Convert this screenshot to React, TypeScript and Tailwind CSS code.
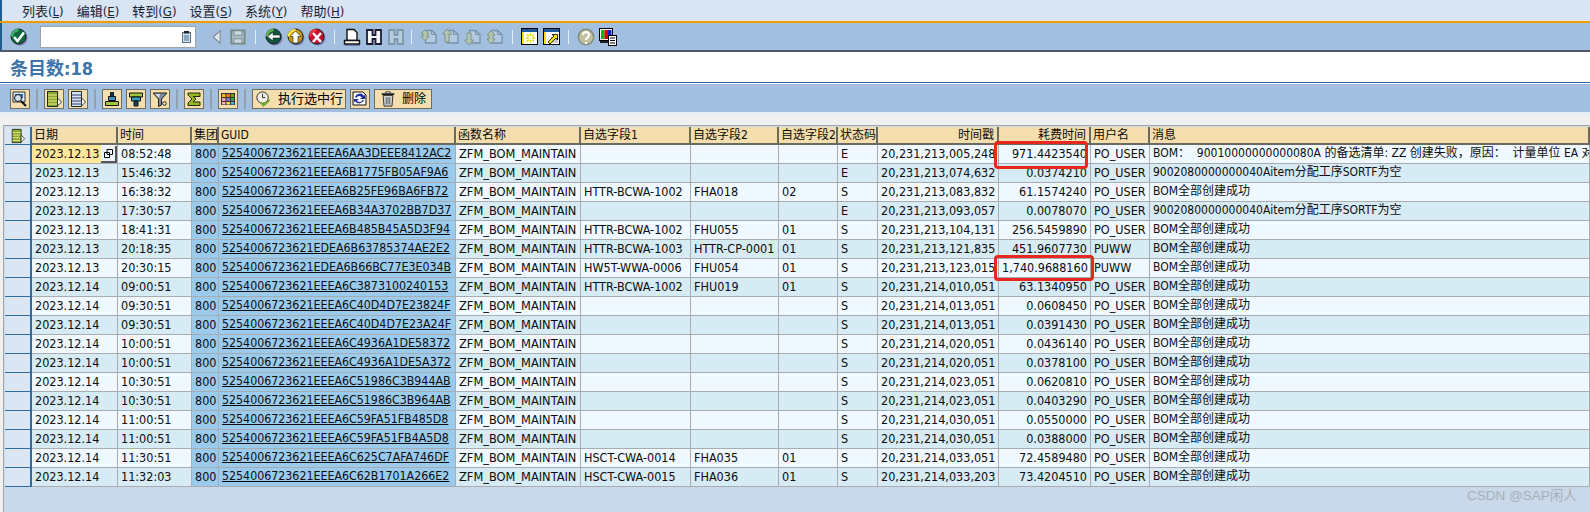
import type { ReactNode } from 'react';

const latin = '"DejaVu Sans Condensed", "Noto Sans CJK SC", sans-serif';

type Row = [string, string, string, string, string, string, string, string, string, string, string];

const ok = 'BOM全部创建成功';
const noOper = '9002080000000040Aitem分配工序SORTF为空';
const fail = 'BOM：\u00a0 90010000000000080A 的备选清单: ZZ 创建失败，原因：\u00a0 计量单位 EA 对';

const rows: Row[] = [
    ['2023.12.13', '08:52:48', '5254006723621EEEA6AA3DEEE8412AC2', '', '', '', 'E', '20,231,213,005,248', '971.4423540', 'PO_USER', fail],
    ['2023.12.13', '15:46:32', '5254006723621EEEA6B1775FB05AF9A6', '', '', '', 'E', '20,231,213,074,632', '0.0374210', 'PO_USER', noOper],
    ['2023.12.13', '16:38:32', '5254006723621EEEA6B25FE96BA6FB72', 'HTTR-BCWA-1002', 'FHA018', '02', 'S', '20,231,213,083,832', '61.1574240', 'PO_USER', ok],
    ['2023.12.13', '17:30:57', '5254006723621EEEA6B34A3702BB7D37', '', '', '', 'E', '20,231,213,093,057', '0.0078070', 'PO_USER', noOper],
    ['2023.12.13', '18:41:31', '5254006723621EEEA6B485B45A5D3F94', 'HTTR-BCWA-1002', 'FHU055', '01', 'S', '20,231,213,104,131', '256.5459890', 'PO_USER', ok],
    ['2023.12.13', '20:18:35', '5254006723621EDEA6B63785374AE2E2', 'HTTR-BCWA-1003', 'HTTR-CP-0001', '01', 'S', '20,231,213,121,835', '451.9607730', 'PUWW', ok],
    ['2023.12.13', '20:30:15', '5254006723621EDEA6B66BC77E3E034B', 'HW5T-WWA-0006', 'FHU054', '01', 'S', '20,231,213,123,015', '1,740.9688160', 'PUWW', ok],
    ['2023.12.14', '09:00:51', '5254006723621EEEA6C3873100240153', 'HTTR-BCWA-1002', 'FHU019', '01', 'S', '20,231,214,010,051', '63.1340950', 'PO_USER', ok],
    ['2023.12.14', '09:30:51', '5254006723621EEEA6C40D4D7E23824F', '', '', '', 'S', '20,231,214,013,051', '0.0608450', 'PO_USER', ok],
    ['2023.12.14', '09:30:51', '5254006723621EEEA6C40D4D7E23A24F', '', '', '', 'S', '20,231,214,013,051', '0.0391430', 'PO_USER', ok],
    ['2023.12.14', '10:00:51', '5254006723621EEEA6C4936A1DE58372', '', '', '', 'S', '20,231,214,020,051', '0.0436140', 'PO_USER', ok],
    ['2023.12.14', '10:00:51', '5254006723621EEEA6C4936A1DE5A372', '', '', '', 'S', '20,231,214,020,051', '0.0378100', 'PO_USER', ok],
    ['2023.12.14', '10:30:51', '5254006723621EEEA6C51986C3B944AB', '', '', '', 'S', '20,231,214,023,051', '0.0620810', 'PO_USER', ok],
    ['2023.12.14', '10:30:51', '5254006723621EEEA6C51986C3B964AB', '', '', '', 'S', '20,231,214,023,051', '0.0403290', 'PO_USER', ok],
    ['2023.12.14', '11:00:51', '5254006723621EEEA6C59FA51FB485D8', '', '', '', 'S', '20,231,214,030,051', '0.0550000', 'PO_USER', ok],
    ['2023.12.14', '11:00:51', '5254006723621EEEA6C59FA51FB4A5D8', '', '', '', 'S', '20,231,214,030,051', '0.0388000', 'PO_USER', ok],
    ['2023.12.14', '11:30:51', '5254006723621EEEA6C625C7AFA746DF', 'HSCT-CWA-0014', 'FHA035', '01', 'S', '20,231,214,033,051', '72.4589480', 'PO_USER', ok],
    ['2023.12.14', '11:32:03', '5254006723621EEEA6C62B1701A266E2', 'HSCT-CWA-0015', 'FHA036', '01', 'S', '20,231,214,033,203', '73.4204510', 'PO_USER', ok],
];

const columns = [
    { label: '日期', w: 'w-[86px]' },
    { label: '时间', w: 'w-[74px]' },
    { label: '集团', w: 'w-[27px]' },
    { label: 'GUID', w: 'w-[237px]' },
    { label: '函数名称', w: 'w-[125px]' },
    { label: '自选字段1', w: 'w-[110px]' },
    { label: '自选字段2', w: 'w-[88px]' },
    { label: '自选字段2', w: 'w-[59px]' },
    { label: '状态码', w: 'w-[40px]' },
    { label: '时间戳', w: 'w-[121px]', right: true },
    { label: '耗费时间', w: 'w-[92px]', right: true },
    { label: '用户名', w: 'w-[59px]' },
    { label: '消息', w: '' },
];

const menus = [
    ['列表', 'L'],
    ['编辑', 'E'],
    ['转到', 'G'],
    ['设置', 'S'],
    ['系统', 'Y'],
    ['帮助', 'H'],
];

function Svg({ size = 18, children }: { size?: number; children: ReactNode }) {
    return (
        <svg width={size} height={size} viewBox="0 0 18 18" className="block shrink-0">
            {children}
        </svg>
    );
}

function RoundIcon({ color, edge, children }: { color: string; edge: string; children: ReactNode }) {
    return (
        <Svg>
            <circle cx="10" cy="10" r="7.5" fill="#7d78b4" />
            <circle cx="8.5" cy="8.5" r="7.5" fill={color} stroke="#10201c" strokeWidth="1" />
            <path d="M2 8.5a6.5 6.5 0 0 1 6.5-6.5" fill="none" stroke={edge} strokeWidth="2.5" />
            {children}
        </Svg>
    );
}

const CheckIcon = () => (
    <RoundIcon color="#0d6a3c" edge="#3fb06a">
        <path d="M4 9l3.5 4L14 4.5" fill="none" stroke="#fff" strokeWidth="2.6" />
    </RoundIcon>
);
const BackIcon = () => (
    <RoundIcon color="#0e5a40" edge="#5fb44a">
        <path d="M2.5 8.5L8 4v3h7v3H8v3z" fill="#fff" stroke="#10201c" strokeWidth=".6" />
    </RoundIcon>
);
const UpIcon = () => (
    <RoundIcon color="#c99a10" edge="#ffe640">
        <path d="M8.5 3L14 8.5h-3V15H6V8.5H3z" fill="#fff" stroke="#10201c" strokeWidth=".6" />
    </RoundIcon>
);
const CancelIcon = () => (
    <RoundIcon color="#c8102e" edge="#ee3040">
        <path d="M5 5l8 9M13 5l-8 9" fill="none" stroke="#fff" strokeWidth="2.6" />
    </RoundIcon>
);

const PrevIcon = () => (
    <Svg size={14}>
        <path d="M13 1v16L4 9z" fill="#dfe6ee" stroke="#7b8894" strokeWidth="1.4" />
    </Svg>
);

const SaveIcon = () => (
    <Svg size={16}>
        <path d="M1.5 1.5h15v15h-15z" fill="#a9bcc9" stroke="#75897f" strokeWidth="2" />
        <path d="M4.5 2v5h9V2zM4.5 11v5h9v-5z" fill="#c9d8e4" stroke="#75897f" />
    </Svg>
);

const PrintIcon = () => (
    <Svg>
        <path d="M4 1.5h7l3 3v8H4z" fill="#fff" stroke="#111" strokeWidth="1.4" />
        <path d="M1.5 12.5h15V16h-15z" fill="#fff" stroke="#111" strokeWidth="1.4" />
        <path d="M2 17.5h15" stroke="#7d78b4" />
    </Svg>
);

const FindIcon = ({ dim }: { dim?: boolean }) => (
    <Svg>
        <path
            d="M2 2h5.5v5h3V2H16v14h-5.5v-5h-3v5H2z"
            fill={dim ? '#b8cbdd' : '#f4f6fa'}
            stroke={dim ? '#7d99ad' : '#1c1c34'}
            strokeWidth="1.8"
        />
    </Svg>
);

const PageArrow = ({ arrows }: { arrows: string }) => (
    <Svg>
        <path d="M5.5 2.5h6l4.5 4V15H5.5z" fill="#b3c9e2" stroke="#7294aa" strokeWidth="1.3" />
        <path d="M11.5 2.5v4H16" fill="none" stroke="#7294aa" />
        <path d={arrows} fill="#b5c6b0" stroke="#7c9488" strokeWidth="1" />
    </Svg>
);

const WindowIcon = ({ children }: { children: ReactNode }) => (
    <Svg>
        <rect x=".5" y=".5" width="16" height="16" fill="#fff" stroke="#000" />
        <rect x="1" y="1" width="15" height="3" fill="#1c5aa0" />
        <rect x="1" y="4" width="2" height="12" fill="#ffe000" />
        {children}
    </Svg>
);

const HelpIcon = () => (
    <Svg>
        <circle cx="9" cy="9" r="7.6" fill="#c4c2a0" stroke="#88907c" strokeWidth="1.6" />
        <path d="M6 7c0-4 6-4 6 0 0 2.5-3 2.5-3 5" fill="none" stroke="#fff" strokeWidth="2" />
        <path d="M8 14h2v2H8z" fill="#fff" />
    </Svg>
);

const LayoutIcon = () => (
    <Svg>
        <rect x=".5" y=".5" width="13" height="12" fill="#fff" stroke="#000" />
        <rect x="2" y="2" width="3.5" height="9" fill="#00c000" />
        <rect x="5.5" y="2" width="3.5" height="9" fill="#e00000" />
        <rect x="9" y="2" width="3.5" height="9" fill="#1020d0" />
        <path d="M1 13h10v2H1z" fill="#222" />
        <rect x="9.5" y="7.5" width="8" height="10" fill="#fff" stroke="#000" />
        <path d="M11 10h5M11 12.5h5M11 15h5" stroke="#000" />
    </Svg>
);

const RowsIcon = ({ green, size = 18 }: { green?: boolean; size?: number }) => (
    <Svg size={size}>
        <path d="M2.5 1.5h10v15h-10z" fill={green ? '#8aa830' : '#d8e4f2'} stroke="#1d2b20" />
        <path d="M3 5h9M3 8h9M3 11h9M3 14h9" stroke={green ? '#f2e890' : '#2f3f70'} strokeWidth="1" />
        <path d="M12.5 8v8l4-4z" fill="#fff" stroke="#111" strokeWidth=".8" />
    </Svg>
);

function IconButton({ children, className = '' }: { children: ReactNode; className?: string }) {
    return (
        <button className={`flex h-[20px] w-[20px] shrink-0 items-center justify-center border border-[#6f6d5c] bg-[#f4deae] ${className}`}>
            {children}
        </button>
    );
}

const BarSep = ({ className = '' }: { className?: string }) => <div className={`h-[14px] w-[1px] shrink-0 bg-[#e8eef6] ${className}`} />;
const AppSep = ({ className = '' }: { className?: string }) => <div className={`h-[20px] w-[2px] shrink-0 bg-[#93a0b0] ${className}`} />;

export default function App() {
    return (
        <div className="relative flex h-[512px] w-[1590px] flex-col overflow-hidden bg-[#f0f0f0] text-black" style={{ fontFamily: latin }}>
            {/* Menu */}
            <div className="flex h-[21px] shrink-0 items-center gap-[13px] border-l-2 border-[#1f5b8d] bg-[#d9e5f3] pl-[20px] pt-[3px] text-[13px] text-[#1a2430]">
                {menus.map(([name, key]) => (
                    <span key={key} className="whitespace-nowrap">
                        {name}(<span className="underline">{key}</span>)
                    </span>
                ))}
            </div>
            <div className="h-[2px] shrink-0 bg-[#f29c00]" />

            {/* System toolbar */}
            <div className="flex h-[27px] shrink-0 items-center border-l-2 border-[#1f5b8d] bg-[#a3bfe0]">
                <div className="ml-[8px]"><CheckIcon /></div>
                <div className="ml-[12px] flex h-[22px] w-[156px] shrink-0 items-center justify-end border border-[#9aa4ad] bg-white pr-[4px]">
                    <svg width="9" height="12" viewBox="0 0 9 12" className="block">
                        <rect x=".5" y="1.5" width="8" height="10" fill="#cfe0ee" stroke="#5a6f80" />
                        <rect x="2" y="0" width="5" height="2.5" fill="#222" />
                        <path d="M2 5h5M2 7h5M2 9h5" stroke="#4a6d8c" />
                    </svg>
                </div>
                <div className="ml-[14px]"><PrevIcon /></div>
                <div className="ml-[6px]"><SaveIcon /></div>
                <BarSep className="ml-[9px]" />
                <div className="ml-[9px]"><BackIcon /></div>
                <div className="ml-[4px]"><UpIcon /></div>
                <div className="ml-[3px]"><CancelIcon /></div>
                <BarSep className="ml-[8px]" />
                <div className="ml-[8px]"><PrintIcon /></div>
                <div className="ml-[4px]"><FindIcon /></div>
                <div className="ml-[4px]"><FindIcon dim /></div>
                <BarSep className="ml-[6px]" />
                <div className="ml-[8px]"><PageArrow arrows="M5 2l4 4H7v2.5h2l-4 4-4-4h2V6H1z" /></div>
                <div className="ml-[4px]"><PageArrow arrows="M5 1l4.5 5H7v8H3V6H.5z" /></div>
                <div className="ml-[4px]"><PageArrow arrows="M5 17l4.5-5H7V5H3v7H.5z" /></div>
                <div className="ml-[4px]"><PageArrow arrows="M5 3l4 4H7v4h2l-4 5-4-5h2V7H1z" /></div>
                <BarSep className="ml-[8px]" />
                <div className="ml-[8px]">
                    <WindowIcon>
                        <path d="M9.5 5.5v9M5 10h9M6 6.5l7 7M13 6.5l-7 7" stroke="#e8d000" strokeWidth="1.3" />
                        <path d="M7.5 8h4v4h-4z" fill="#fff" />
                    </WindowIcon>
                </div>
                <div className="ml-[4px]">
                    <WindowIcon>
                        <rect x="8" y="9" width="7" height="6" fill="#c8c8c8" />
                        <path d="M5 14l6-6-2-1.5h5.5V12L13 10l-6 6z" fill="#ffe000" stroke="#000" strokeWidth=".8" />
                    </WindowIcon>
                </div>
                <BarSep className="ml-[7px]" />
                <div className="ml-[8px]"><HelpIcon /></div>
                <div className="ml-[4px]"><LayoutIcon /></div>
            </div>
            <div className="h-[2px] shrink-0 bg-[#4f5a64]" />

            {/* Title */}
            <div className="flex h-[30px] shrink-0 items-center bg-white pl-[10px] pt-[3px] text-[18px] font-bold text-[#3a74a8]">
                条目数:18
            </div>
            <div className="h-[1px] shrink-0 bg-[#2f6a9e]" />
            <div className="h-[1px] shrink-0 bg-white" />

            {/* Application toolbar */}
            <div className="flex h-[28px] shrink-0 items-center bg-[#a3bfe0] pl-[10px] pt-[2px]">
                <IconButton>
                    <Svg>
                        <path d="M2 2h12v10H2z" fill="#d8e4f2" stroke="#333" />
                        <path d="M4 4h8v4H4z" fill="#2a72c8" />
                        <circle cx="7" cy="8" r="3.5" fill="#cfe2f4" stroke="#111" />
                        <path d="M10 11l5 5" stroke="#111" strokeWidth="2" />
                    </Svg>
                </IconButton>
                <AppSep className="ml-[6px]" />
                <IconButton className="ml-[6px]"><RowsIcon green /></IconButton>
                <IconButton className="ml-[4px]"><RowsIcon /></IconButton>
                <AppSep className="ml-[6px]" />
                <IconButton className="ml-[6px]">
                    <Svg>
                        <path d="M7.5 2.5h3v4h-3z" fill="#203a68" stroke="#111" />
                        <path d="M5.5 6.5h7v4h-7z" fill="#3c92c0" stroke="#111" />
                        <path d="M2.5 11.5h13v4h-13z" fill="#a4c83c" stroke="#111" />
                    </Svg>
                </IconButton>
                <IconButton className="ml-[4px]">
                    <Svg>
                        <path d="M2.5 3h13v4h-13z" fill="#a4c83c" stroke="#111" />
                        <path d="M4.5 7h9v4h-9z" fill="#2f9cc0" stroke="#111" />
                        <path d="M7 11h4v5H7z" fill="#203a68" stroke="#111" />
                    </Svg>
                </IconButton>
                <IconButton className="ml-[4px]">
                    <Svg>
                        <path d="M2 3h14L10.500 9v6l-3 1.500V9z" fill="#7c8a9c" stroke="#222" />
                        <path d="M4 4h5L8 8z" fill="#d8e0ea" />
                        <circle cx="13.5" cy="13.5" r="1.8" fill="none" stroke="#222" />
                    </Svg>
                </IconButton>
                <AppSep className="ml-[6px]" />
                <IconButton className="ml-[6px]">
                    <Svg>
                        <path d="M3 3h12v3.5H8l3 2.500-3 3h7V15.500H3V13l4-4-4-4z" fill="#98b820" stroke="#1d2b10" />
                    </Svg>
                </IconButton>
                <AppSep className="ml-[6px]" />
                <IconButton className="ml-[6px]">
                    <Svg>
                        <rect x="2" y="3" width="14" height="12" fill="#333" />
                        <path d="M3 4h3.500v3H3z" fill="#f2c200" />
                        <path d="M7.500 4H11v3H7.500z" fill="#e87820" />
                        <path d="M12 4h3v3h-3z" fill="#7a9c20" />
                        <path d="M3 8h3.500v3H3z" fill="#f0a0a0" />
                        <path d="M7.500 8H11v3H7.500z" fill="#8a70c0" />
                        <path d="M12 8h3v3h-3z" fill="#3aa040" />
                        <path d="M3 12h3.500v2.500H3z" fill="#ffb0b0" />
                        <path d="M7.500 12H11v2.500H7.500z" fill="#ffe060" />
                        <path d="M12 12h3v2.500h-3z" fill="#50b0f0" />
                    </Svg>
                </IconButton>
                <AppSep className="ml-[6px]" />
                <button className="ml-[6px] flex h-[20px] w-[94px] shrink-0 items-center justify-center gap-[6px] border border-[#6f6d5c] bg-[#f4deae] text-[13px] text-black">
                    <Svg size={17}>
                        <circle cx="8" cy="7" r="6" fill="#f6f4ea" stroke="#222" />
                        <path d="M8 3v4h3" fill="none" stroke="#222" />
                        <path d="M6 12l3 3.5 6.5-6" fill="none" stroke="#6fae2c" strokeWidth="2" />
                    </Svg>
                    <span className="whitespace-nowrap">执行选中行</span>
                </button>
                <IconButton className="ml-[4px]">
                    <Svg>
                        <path d="M2 2h10l3 3v10H2z" fill="#fff" stroke="#111" />
                        <path d="M4 7a5 5 0 0 1 9-1l1-2v5H9l2-1.5A3 3 0 0 0 5.5 8z" fill="#1a2ea0" />
                        <path d="M13 10a5 5 0 0 1-9 1l-1 2V9h5l-2 1.5a3 3 0 0 0 5.5-.5z" fill="#1a2ea0" />
                    </Svg>
                </IconButton>
                <button className="ml-[4px] flex h-[20px] w-[58px] shrink-0 items-center justify-center gap-[6px] border border-[#6f6d5c] bg-[#f4deae] text-[12px] text-black">
                    <Svg size={16}>
                        <path d="M2 3.5h14" stroke="#222" strokeWidth="2" />
                        <path d="M3.5 5h11l-1 12h-9z" fill="#cfd2d6" stroke="#222" />
                        <path d="M7 7v8M9 7v8M11 7v8" stroke="#555" />
                        <path d="M6.5 1h5v2h-5z" fill="#fff" stroke="#222" />
                    </Svg>
                    <span className="whitespace-nowrap">删除</span>
                </button>
            </div>
            <div className="h-[2px] shrink-0 bg-[#e6eff8]" />
            <div className="h-[11px] shrink-0 bg-[#f0f0f0]" />

            {/* ALV grid */}
            <div className="flex min-h-0 flex-1 pl-[3px]">
                <div className="min-w-0 flex-1 border-l border-t border-[#a6a6a6] bg-[#c9d9e9] pl-[1px] pt-[1px]">
                    <table className="w-[1585px] table-fixed border-separate border-spacing-0 text-[12.5px] leading-[17px] text-[#0c0c0c]">
                        <colgroup>
                            <col className="w-[27px]" />
                            {columns.map((c, i) => (
                                <col key={i} className={c.w} />
                            ))}
                        </colgroup>
                        <thead>
                            <tr>
                                <th className="h-[18px] border-b border-r-2 border-[#2e6da4] bg-[#dbe6f5] p-0">
                                    <div className="flex justify-center">
                                        <RowsIcon green size={16} />
                                    </div>
                                </th>
                                {columns.map((c, i) => (
                                    <th
                                        key={i}
                                        className={`h-[18px] overflow-hidden whitespace-nowrap border-b-2 border-r-2 border-[#6a6a62] bg-[#f4deae] p-0 pl-[2px] pr-[3px] pt-[1px] text-[12px] font-normal leading-[15px] ${c.right ? 'text-right' : 'text-left'}`}
                                    >
                                        {c.label}
                                    </th>
                                ))}
                            </tr>
                        </thead>
                        <tbody>
                            {rows.map((r, i) => {
                                const bg = i % 2 ? 'bg-[#d7ebf5]' : 'bg-[#eff9ff]';
                                const cell = `h-[19px] overflow-hidden whitespace-nowrap border-b border-r border-[#a9adb1] p-0 pb-[1px] pl-[3px] pr-[3px] ${bg}`;
                                const key = 'h-[19px] overflow-hidden whitespace-nowrap border-b border-r border-[#a9adb1] bg-[#9bcbec] p-0 pb-[1px] pl-[3px] pr-[3px]';
                                return (
                                    <tr key={i}>
                                        <td className="h-[19px] border-b border-r-2 border-[#2e6da4] bg-[#dbe6f5] p-0" />
                                        {i === 0 ? (
                                            <td className="h-[19px] border-b border-r border-[#a9adb1] bg-[#eff9ff] p-0">
                                                <div className="flex h-[18px] items-center">
                                                    <span className="flex h-[18px] w-[69px] items-center bg-[#ffe79c] pb-[1px] pl-[3px]">{r[0]}</span>
                                                    <span className="flex h-[17px] w-[16px] items-center justify-center border-b-2 border-r-2 border-[#55595c] bg-[#eef3f8]">
                                                        <svg width="9" height="9" viewBox="0 0 9 9" className="block">
                                                            <path d="M3 .5h5.5v5H3zM.5 3.5h5v5h-5z" fill="#fff" stroke="#000" />
                                                        </svg>
                                                    </span>
                                                </div>
                                            </td>
                                        ) : (
                                            <td className={cell}>{r[0]}</td>
                                        )}
                                        <td className={cell}>{r[1]}</td>
                                        <td className={key}>800</td>
                                        <td className={`${key} text-[12.3px]`}><span className="underline">{r[2]}</span></td>
                                        <td className={`${cell} text-[12.7px]`}>ZFM_BOM_MAINTAIN</td>
                                        <td className={cell}>{r[3]}</td>
                                        <td className={cell}>{r[4]}</td>
                                        <td className={cell}>{r[5]}</td>
                                        <td className={cell}>{r[6]}</td>
                                        <td className={`${cell} text-right`}>{r[7]}</td>
                                        <td className={`${cell} text-right`}>{r[8]}</td>
                                        <td className={cell}>{r[9]}</td>
                                        <td className={`${cell} text-[12px]`}>{r[10]}</td>
                                    </tr>
                                );
                            })}
                        </tbody>
                    </table>
                </div>
            </div>

            {/* Red annotations drawn over the grid */}
            <div className="absolute left-[994px] top-[141px] h-[28px] w-[94px] rounded-[4px] border-[3px] border-[#e8281e]" />
            <div className="absolute left-[994px] top-[255px] h-[26px] w-[100px] rounded-[4px] border-[3px] border-[#e8281e]" />

            <div className="absolute left-[1467px] top-[486px] whitespace-nowrap text-[13.5px] text-[#a5afba]" style={{ fontFamily: '"Liberation Sans", "Noto Sans CJK SC", sans-serif' }}>
                CSDN @SAP闲人
            </div>
        </div>
    );
}
